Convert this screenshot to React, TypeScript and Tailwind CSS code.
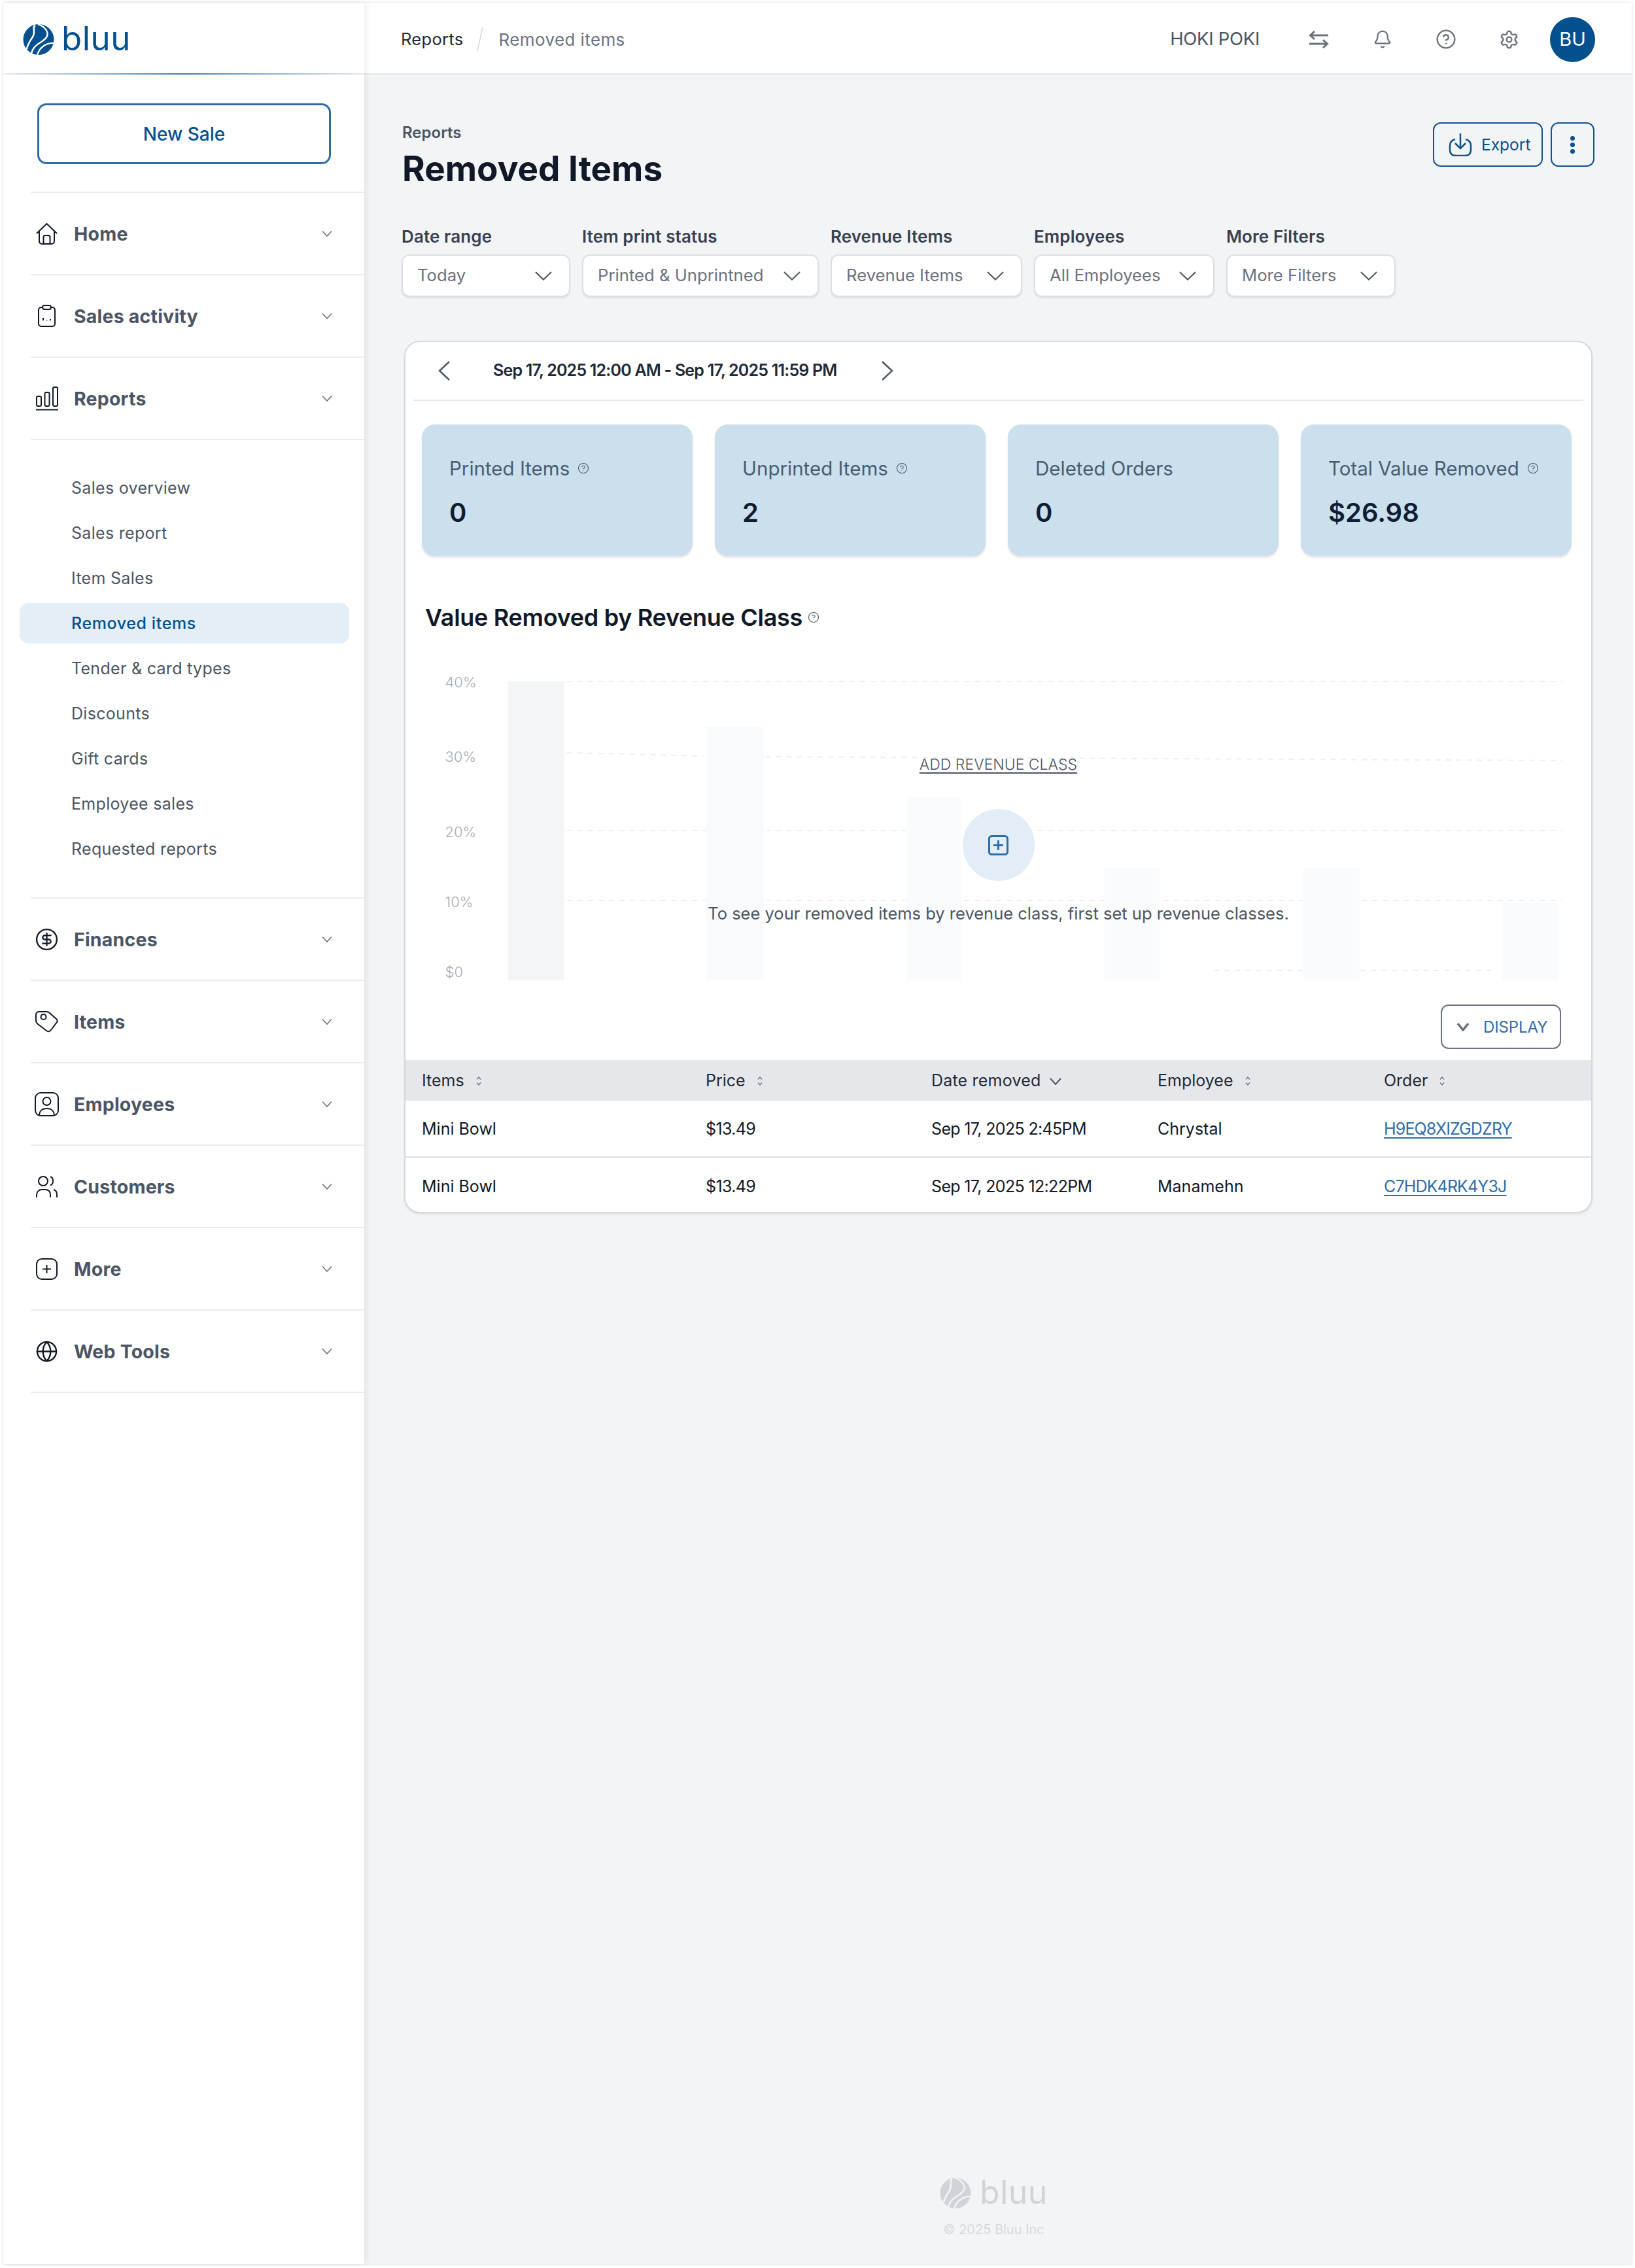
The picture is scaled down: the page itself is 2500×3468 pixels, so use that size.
import { Bell, CircleDollarSign, CircleHelp, Globe, Settings } from "lucide-react";
import type { ReactNode } from "react";

const BLUE = "#04508f";

const Logo = ({ color, swoosh }: { color: string; swoosh: string }) => (
  <svg viewBox="0 0 48 47" className="w-12 h-[47px]">
    <circle cx="24" cy="23.5" r="23.5" fill={color} />
    <path d="M19 2C13 5 21 12 14 21C10 27 7 31 6 38" fill="none" stroke={swoosh} strokeWidth="2.6" />
    <path d="M23 0C33 3 41 12 36 20C30 29 16 30 13 45" fill="none" stroke={swoosh} strokeWidth="2.4" />
    <path d="M48 29C37 28 26 34 22 47" fill="none" stroke={swoosh} strokeWidth="2.4" />
  </svg>
);

const Chevron = () => (
  <svg viewBox="0 0 16 11" className="w-4 h-[11px] ml-auto" fill="none" stroke="#6b7280" strokeWidth="1.6">
    <path d="M1 1.5L8 9L15 1.5" />
  </svg>
);

const SelectChevron = () => (
  <svg viewBox="0 0 26 14" className="w-[26px] h-3.5 ml-auto shrink-0" fill="none" stroke="#4b5563" strokeWidth="2">
    <path d="M1 1L13 12.5L25 1" />
  </svg>
);

const SortIcon = () => (
  <svg viewBox="0 0 10 16" className="w-2.5 h-4 ml-[17px]" fill="none" stroke="#6b7280" strokeWidth="1.4">
    <path d="M2 5.5L5 2L8 5.5M2 10.5L5 14L8 10.5" />
  </svg>
);

const navIcon = "fill-none stroke-[#111827] stroke-2";

const HomeIcon = () => (
  <svg viewBox="0 0 33 33" className={`w-[33px] h-[33px] ${navIcon}`}>
    <path d="M1 16L16.5 1L32 16" />
    <path d="M5 13V28a4 4 0 0 0 4 4H24a4 4 0 0 0 4-4V13" />
    <path d="M11.5 32V22a3 3 0 0 1 3-3h4a3 3 0 0 1 3 3V32" />
  </svg>
);

const ClipboardIcon = () => (
  <svg viewBox="0 0 33 34" className={`w-[33px] h-[34px] ${navIcon}`}>
    <rect x="4" y="4" width="25" height="29" rx="4" />
    <rect x="10" y="1" width="13" height="6" rx="3" className="fill-white" />
    <path d="M11 24V20M16.5 24V23M22 24V22" />
  </svg>
);

const BarsIcon = () => (
  <svg viewBox="0 0 34 37" className={`w-[34px] h-[37px] ${navIcon}`}>
    <rect x="1" y="15" width="7" height="15" rx="2" />
    <rect x="13.5" y="9" width="7" height="21" rx="2" />
    <rect x="26" y="1" width="7" height="29" rx="2" />
    <path d="M0 35.5H34" />
  </svg>
);

const TagIcon = () => (
  <svg viewBox="0 0 35 34" className={`w-[35px] h-[34px] ${navIcon}`}>
    <path d="M6 2H17Q20 2 22 4L32 13Q35 16 33 18L24 30Q21 34 17 31L4 21Q1 19 1 15V7Q1 2 6 2Z" />
    <circle cx="12.5" cy="10" r="4" />
  </svg>
);

const EmployeeIcon = () => (
  <svg viewBox="0 0 37 37" className={`w-[37px] h-[37px] ${navIcon}`}>
    <rect x="1" y="1" width="35" height="35" rx="8" />
    <circle cx="18.5" cy="14" r="6" />
    <path d="M7 35C8 27 12 25 18.5 25C25 25 29 27 30 35" />
  </svg>
);

const CustomersIcon = () => (
  <svg viewBox="0 0 33 33" className={`w-[33px] h-[33px] ${navIcon}`}>
    <circle cx="11" cy="8" r="7" />
    <path d="M1 33V29C1 24 5 21 9 21H14C19 21 22 24 22 29V33" />
    <path d="M22 1.5C27 2 28 12 22 14.5" />
    <path d="M27 21C30 22 32 25 32 28V33" />
  </svg>
);

const PlusBoxIcon = () => (
  <svg viewBox="0 0 33 33" className={`w-[33px] h-[33px] ${navIcon}`}>
    <rect x="1" y="1" width="31" height="31" rx="8" />
    <path d="M16.5 10V23M10 16.5H23" />
  </svg>
);

type NavRowProps = { icon: ReactNode; label: string };

const NavRow = ({ icon, label }: NavRowProps) => (
  <div className="flex items-center h-[126px] ml-[42px] pl-1.5 pr-[49px] border-b-2 border-[#e9ebee]">
    <div className="w-[37px] flex justify-center mr-[23px]">{icon}</div>
    <span className="pt-[3px] text-[28.5px] font-bold text-[#4b5563] tracking-[0.2px]">{label}</span>
    <Chevron />
  </div>
);

const subItems = [
  "Sales overview",
  "Sales report",
  "Item Sales",
  "Removed items",
  "Tender & card types",
  "Discounts",
  "Gift cards",
  "Employee sales",
  "Requested reports",
];

const Sidebar = () => (
  <aside className="w-[552px] shrink-0 bg-white flex flex-col relative z-10 shadow-[3px_0_8px_rgba(0,0,0,0.07)]">
    <div className="h-[108px] flex items-center pl-[30px] pt-1 gap-[11px]">
      <Logo color={BLUE} swoosh="#ffffff" />
      <span className="text-[51px] leading-none text-[#04508f] -mt-1 tracking-[0.5px]">bluu</span>
    </div>
    <div className="h-0.5 bg-linear-to-r from-[#e5e7eb] via-[#3f78ae] to-[#e5e7eb]" />
    <button className="ml-[52px] mt-[44px] w-[449px] h-[93px] shrink-0 rounded-[14px] border-[3px] border-[#2f6da8] text-[28px] font-medium text-[#04508f]">
      New Sale
    </button>
    <div className="h-[44px] shrink-0 ml-[42px] border-b-2 border-[#e9ebee]" />
    <NavRow icon={<HomeIcon />} label="Home" />
    <NavRow icon={<ClipboardIcon />} label="Sales activity" />
    <NavRow icon={<BarsIcon />} label="Reports" />
    <div className="pt-[42px] pb-[43px] flex flex-col gap-[7px]">
      {subItems.map((item) => (
        <div
          key={item}
          className={`ml-[25px] w-[504px] h-[62px] pl-[79px] pt-[2px] rounded-[14px] flex items-center text-[25px] ${
            item === "Removed items" ? "bg-[#e3eef7] text-[#04508f] font-medium tracking-[0.6px]" : "text-[#4b5563] tracking-[0.3px]"
          }`}
        >
          {item}
        </div>
      ))}
    </div>
    <div className="ml-[42px] border-b-2 border-[#e9ebee]" />
    <NavRow icon={<CircleDollarSign className="w-[37px] h-[37px] text-[#111827]" strokeWidth={1.5} />} label="Finances" />
    <NavRow icon={<TagIcon />} label="Items" />
    <NavRow icon={<EmployeeIcon />} label="Employees" />
    <NavRow icon={<CustomersIcon />} label="Customers" />
    <NavRow icon={<PlusBoxIcon />} label="More" />
    <NavRow icon={<Globe className="w-[35px] h-[35px] text-[#111827]" strokeWidth={1.6} />} label="Web Tools" />
  </aside>
);

const TopBar = () => (
  <header className="h-[110px] shrink-0 bg-white border-b-2 border-[#e5e7eb] flex items-center pt-1 pl-[56px] pr-[56px]">
    <span className="text-[25.5px] text-[#1f2937] tracking-[0.3px]">Reports</span>
    <svg viewBox="0 0 10 36" className="w-2.5 h-9 ml-[21px] mr-[23px]" fill="none" stroke="#d1d5db" strokeWidth="1.5">
      <path d="M9 0L1 36" />
    </svg>
    <span className="text-[26px] text-[#6b7280] tracking-[0.4px]">Removed items</span>
    <span className="ml-auto mr-[42px] text-[27.5px] text-[#4b5563] tracking-[-0.3px]">HOKI POKI</span>
    <div className="w-[97px] flex justify-center">
      <svg viewBox="0 0 31 27" className="w-[31px] h-[27px]" fill="none" stroke="#6b7280" strokeWidth="3">
        <path d="M30 7H3M9 1L2.5 7L9 13M1 20H28M22 14L28.5 20L22 26" />
      </svg>
    </div>
    <div className="w-[97px] flex justify-center">
      <Bell className="w-[30px] h-[30px] text-[#6b7280]" strokeWidth={1.8} />
    </div>
    <div className="w-[97px] flex justify-center">
      <CircleHelp className="w-[32px] h-[32px] text-[#6b7280]" strokeWidth={1.8} />
    </div>
    <div className="w-[97px] flex justify-center">
      <Settings className="w-[31px] h-[31px] text-[#6b7280]" strokeWidth={1.9} />
    </div>
    <div className="ml-[14px] w-[69px] h-[69px] rounded-full bg-[#04508f] text-white text-[29px] flex items-center justify-center">
      BU
    </div>
  </header>
);

const filters = [
  { label: "Date range", value: "Today", width: "w-[258px]" },
  { label: "Item print status", value: "Printed & Unprintned", width: "w-[362px]" },
  { label: "Revenue Items", value: "Revenue Items", width: "w-[293px]" },
  { label: "Employees", value: "All Employees", width: "w-[276px]" },
  { label: "More Filters", value: "More Filters", width: "w-[259px]" },
];

const Filters = () => (
  <div className="flex gap-[18px] mt-[57px] -ml-px">
    {filters.map((f) => (
      <div key={f.label} className={f.width}>
        <div className="h-[30px] leading-[30px] text-[26px] font-semibold text-[#374151] tracking-[0.1px]">{f.label}</div>
        <div className="mt-3 h-[65px] bg-white border-2 border-[#dcdfe3] rounded-xl shadow-[0_2px_2px_rgba(0,0,0,0.08)] flex items-center pl-[22px] pr-[26px]">
          <span className="text-[25.7px] text-[#6b7280]">{f.value}</span>
          <SelectChevron />
        </div>
      </div>
    ))}
  </div>
);

const stats = [
  { label: "Printed Items", value: "0", help: true },
  { label: "Unprinted Items", value: "2", help: true },
  { label: "Deleted Orders", value: "0", help: false },
  { label: "Total Value Removed", value: "$26.98", help: true },
];

const StatCards = () => (
  <div className="grid grid-cols-4 gap-[34px] ml-[25px] mr-[30px] mt-9">
    {stats.map((s) => (
      <div key={s.label} className="h-[201px] rounded-[20px] bg-[#cbdfed] shadow-[0_3px_3px_rgba(0,0,0,0.1)] pl-[42px] pt-[50px]">
        <div className="h-[34px] flex items-center gap-3 text-[29.5px] text-[#475d72]">
          {s.label}
          {s.help && <CircleHelp className="w-[18px] h-[18px] text-[#475d72]" strokeWidth={1.5} />}
        </div>
        <div className="mt-[26px] h-[50px] leading-[50px] text-[40px] font-semibold text-[#0f1d33]">{s.value}</div>
      </div>
    ))}
  </div>
);

const bars = [
  { x: 156, w: 86, top: 76, fill: "#f3f5f7" },
  { x: 459, w: 88, top: 146, fill: "#f8fafb" },
  { x: 765, w: 84, top: 253, fill: "#f9fbfd" },
  { x: 1068, w: 85, top: 361, fill: "#f9fbfd" },
  { x: 1372, w: 86, top: 361, fill: "#f9fbfd" },
  { x: 1677, w: 85, top: 415, fill: "#f9fbfd" },
];

const grid = [
  { d: "M246 76H1768" },
  { d: "M246 185L455 190M550 191L1768 197" },
  { d: "M246 304H1768" },
  { d: "M246 411H1768" },
  { d: "M1236 518H1670" },
];

const yLabels = [
  { label: "40%", y: 85 },
  { label: "30%", y: 199 },
  { label: "20%", y: 314 },
  { label: "10%", y: 421 },
  { label: "$0", y: 528 },
];

const RevenueChart = () => (
  <div className="relative h-[570px]">
    <svg viewBox="0 0 1812 570" className="absolute inset-0 w-full h-full">
      {grid.map((g) => (
        <path key={g.d} d={g.d} fill="none" stroke="#eceef0" strokeWidth="2" strokeDasharray="8 8" />
      ))}
      {bars.map((b) => (
        <rect key={b.x} x={b.x} y={b.top} width={b.w} height={533 - b.top} fill={b.fill} />
      ))}
      {yLabels.map((l) => (
        <text key={l.label} x="60" y={l.y} fontSize="22" fontWeight="300" fill="#a8acb2">
          {l.label}
        </text>
      ))}
    </svg>
    <div className="absolute inset-0 flex flex-col items-center pt-[188px]">
      <span className="h-[30px] leading-[30px] text-[23px] font-light text-[#4b5563] underline underline-offset-4">ADD REVENUE CLASS</span>
      <div className="mt-[53px] w-[110px] h-[110px] rounded-full bg-[#e3edf7] flex items-center justify-center">
        <svg viewBox="0 0 31 31" className="w-[31px] h-[31px]" fill="none" stroke="#2f6da8" strokeWidth="3">
          <rect x="1.5" y="1.5" width="28" height="28" rx="4" />
          <path d="M15.5 8V23M8 15.5H23" />
        </svg>
      </div>
      <span className="mt-[33px] h-[34px] leading-[34px] text-[25.5px] text-[#4b5563]">
        To see your removed items by revenue class, first set up revenue classes.
      </span>
    </div>
  </div>
);

const tableCols = "grid-cols-[434px_345px_346px_346px_1fr]";

const rows = [
  { item: "Mini Bowl", price: "$13.49", date: "Sep 17, 2025 2:45PM", employee: "Chrystal", order: "H9EQ8XIZGDZRY" },
  { item: "Mini Bowl", price: "$13.49", date: "Sep 17, 2025 12:22PM", employee: "Manamehn", order: "C7HDK4RK4Y3J" },
];

const ItemsTable = () => (
  <div className="text-[25px]">
    <div className={`grid ${tableCols} items-center h-[62px] pl-[25px] pt-0.5 bg-[#e5e7eb] text-[#1f2937]`}>
      <div className="flex items-center">Items<SortIcon /></div>
      <div className="flex items-center">Price<SortIcon /></div>
      <div className="flex items-center tracking-[0.2px]">
        Date removed
        <svg viewBox="0 0 18 11" className="w-[18px] h-[11px] ml-3.5" fill="none" stroke="#4b5563" strokeWidth="2">
          <path d="M1 1L9 10L17 1" />
        </svg>
      </div>
      <div className="flex items-center">Employee<SortIcon /></div>
      <div className="flex items-center">Order<SortIcon /></div>
    </div>
    {rows.map((r, i) => (
      <div
        key={r.order}
        className={`grid ${tableCols} items-center pl-[25px] text-[#111827] ${
          i === 0 ? "h-[88px] pt-0.5 border-b-[3px] border-[#e5e7eb]" : "h-[82px] pt-1.5"
        }`}
      >
        <div>{r.item}</div>
        <div className="tracking-[-0.65px]">{r.price}</div>
        <div className="tracking-[-0.65px]">{r.date}</div>
        <div>{r.employee}</div>
        <div className="text-[#2f6da8] underline underline-offset-4 tracking-[-0.85px]">{r.order}</div>
      </div>
    ))}
  </div>
);

const ReportCard = () => (
  <section className="ml-[3px] mt-[67px] w-[1817px] bg-white border-2 border-[#d5d8dd] rounded-3xl overflow-hidden shadow-[0_2px_3px_rgba(0,0,0,0.08)]">
    <div className="h-[90px] mx-3 border-b-2 border-[#e5e7eb] flex items-center pl-[38px]">
      <svg viewBox="0 0 18 30" className="w-[18px] h-[30px]" fill="none" stroke="#4b5563" strokeWidth="2.4">
        <path d="M17 1L2 15L17 29" />
      </svg>
      <span className="ml-[66px] text-[25px] font-semibold text-[#1f2937] tracking-[-0.8px]">
        Sep 17, 2025 12:00 AM - Sep 17, 2025 11:59 PM
      </span>
      <svg viewBox="0 0 18 30" className="ml-[68px] w-[18px] h-[30px]" fill="none" stroke="#4b5563" strokeWidth="2.4">
        <path d="M1 1L16 15L1 29" />
      </svg>
    </div>
    <StatCards />
    <div className="mt-[72px] ml-[30px] h-[44px] flex items-center gap-2 text-[36px] font-semibold text-[#111827] tracking-[-0.3px]">
      Value Removed by Revenue Class
      <CircleHelp className="w-[18px] h-[18px] text-[#4b5563]" strokeWidth={1.5} />
    </div>
    <RevenueChart />
    <div className="flex justify-end pr-[46px] pb-[17px]">
      <button className="w-[184px] h-[68px] rounded-xl border-2 border-[#6b7280] flex items-center pl-[22px]">
        <svg viewBox="0 0 20 14" className="w-5 h-3.5" fill="none" stroke="#6b7280" strokeWidth="3.6">
          <path d="M2 2L10 12L18 2" />
        </svg>
        <span className="ml-[21px] pt-0.5 text-[24px] text-[#2f6da8] tracking-[-0.1px]">DISPLAY</span>
      </button>
    </div>
    <ItemsTable />
  </section>
);

const App = () => (
  <div className="w-[2500px] h-[3468px] bg-white pt-1 px-[5px] pb-1.5 font-['Inter',sans-serif]">
    <div className="flex h-[3458px] shadow-[0_0_3px_rgba(0,0,0,0.18)]">
      <Sidebar />
      <main className="flex-1 flex flex-col bg-[#f3f4f6]">
        <TopBar />
        <div className="flex-1 pt-[73px] pl-[58px] pr-[57px]">
          <div className="flex justify-between items-start">
            <div>
              <div className="h-8 leading-8 text-[24px] font-semibold text-[#4b5563]">Reports</div>
              <h1 className="mt-[7px] h-16 leading-[64px] text-[53px] font-bold text-[#111827]">Removed Items</h1>
            </div>
            <div className="flex gap-3">
              <button className="w-[168px] h-[68px] rounded-xl border-2 border-[#0f5390] flex items-center pl-[22px] gap-[14px] text-[24.5px] text-[#04508f]">
                <svg viewBox="0 0 36 36" className="w-9 h-9" fill="none" stroke="#0f5390" strokeWidth="2.5">
                  <path d="M18 1V24M10 16L18 24L26 16" />
                  <path d="M10 10Q2 12 2 20V26Q2 35 11 35H25Q34 35 34 26V20Q34 12 26 10" />
                </svg>
                Export
              </button>
              <button className="w-[67px] h-[68px] rounded-xl border-2 border-[#0f5390] flex flex-col items-center justify-center gap-[3px]">
                <span className="w-[7px] h-[7px] rounded-full bg-[#04508f]" />
                <span className="w-[7px] h-[7px] rounded-full bg-[#04508f]" />
                <span className="w-[7px] h-[7px] rounded-full bg-[#04508f]" />
              </button>
            </div>
          </div>
          <Filters />
          <ReportCard />
        </div>
        <footer className="flex flex-col items-center pr-[13px] pb-[41px]">
          <div className="flex items-center gap-[13px]">
            <Logo color="#d0d4d9" swoosh="#f3f4f6" />
            <span className="text-[50px] leading-none text-[#d0d4d9] -mt-1 tracking-[0.5px]">bluu</span>
          </div>
          <div className="mt-5 text-[20px] leading-6 text-[#d6dade]">© 2025 Bluu Inc</div>
        </footer>
      </main>
    </div>
  </div>
);

export default App;
